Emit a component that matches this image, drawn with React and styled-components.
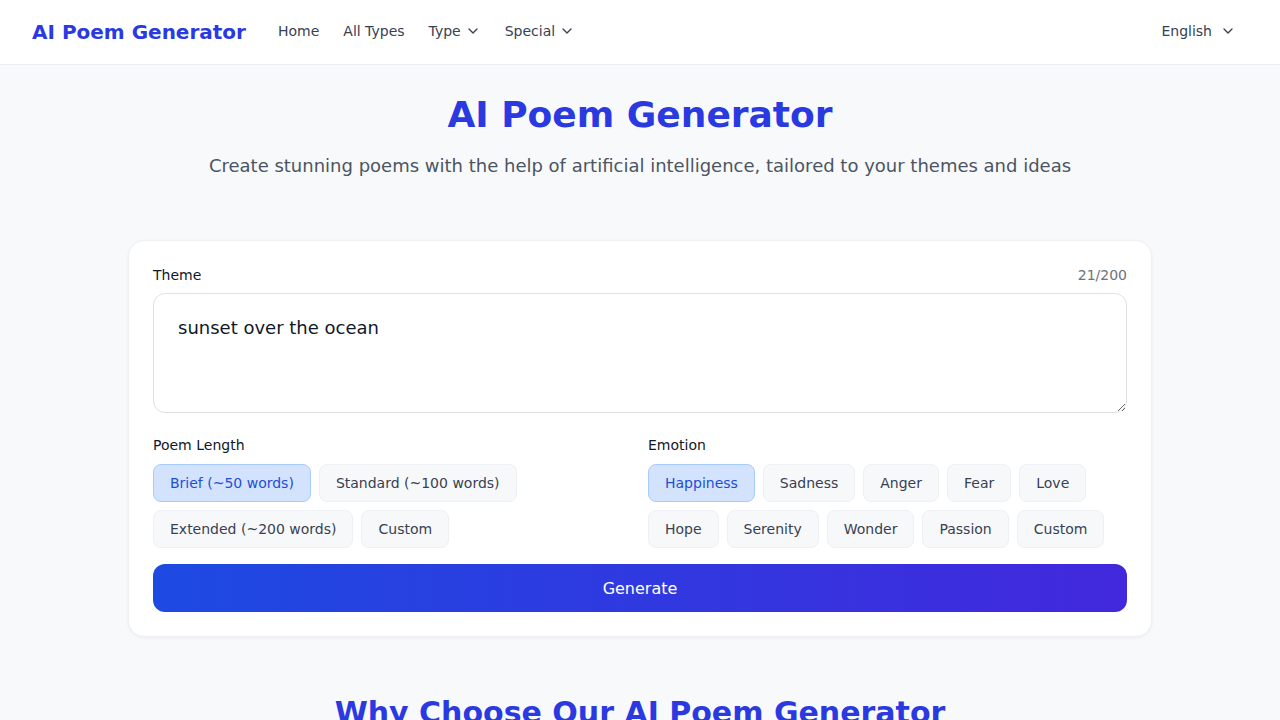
import styled, { createGlobalStyle } from "styled-components"

const Global = createGlobalStyle`
*{box-sizing:border-box;}
body{
    margin:0;
    background:#f8f9fa;
    font-family:"DejaVu Sans","Noto Sans",sans-serif;
    color:#111827;
}
`

const Chevron = () => (
    <svg width="16" height="16" viewBox="0 0 24 24" fill="none" stroke="currentColor" strokeWidth="2" strokeLinecap="round" strokeLinejoin="round">
        <path d="m6 9 6 6 6-6" />
    </svg>
)

const lengths = ["Brief (~50 words)", "Standard (~100 words)", "Extended (~200 words)", "Custom"]
const emotions = ["Happiness", "Sadness", "Anger", "Fear", "Love", "Hope", "Serenity", "Wonder", "Passion", "Custom"]

const App = () => {
    return (
        <>
            <Global />
            <Header>
                <Left>
                    <Logo>AI Poem Generator</Logo>
                    <Nav>
                        <NavLink>Home</NavLink>
                        <NavLink>All Types</NavLink>
                        <NavLink>Type <Chevron /></NavLink>
                        <NavLink>Special <Chevron /></NavLink>
                    </Nav>
                </Left>
                <Lang>English <Chevron /></Lang>
            </Header>
            <Main>
                <Hero>
                    <h1>AI Poem Generator</h1>
                    <p>Create stunning poems with the help of artificial intelligence, tailored to your themes and ideas</p>
                </Hero>
                <Card>
                    <LabelRow>
                        <Label>Theme</Label>
                        <Count>21/200</Count>
                    </LabelRow>
                    <TextArea defaultValue="sunset over the ocean" />
                    <Options>
                        <div>
                            <Label $gap={9}>Poem Length</Label>
                            <Chips>
                                {lengths.map((l, i) => (
                                    <Chip key={l} $active={i === 0}>{l}</Chip>
                                ))}
                            </Chips>
                        </div>
                        <div>
                            <Label $gap={9}>Emotion</Label>
                            <Chips>
                                {emotions.map((e, i) => (
                                    <Chip key={e} $active={i === 0}>{e}</Chip>
                                ))}
                            </Chips>
                        </div>
                    </Options>
                    <Generate>Generate</Generate>
                </Card>
                <SectionTitle>Why Choose Our AI Poem Generator</SectionTitle>
            </Main>
        </>
    )
}

export default App

const Header = styled.header`
height: 65px;
background: #fff;
border-bottom: 1px solid #eceef1;
display: flex;
align-items: center;
justify-content: space-between;
padding: 0 32px;
`
const Left = styled.div`
display: flex;
align-items: center;
gap: 32px;
`
const Logo = styled.div`
font-size: 20px;
font-weight: 700;
color: #2a3ae0;
`
const Nav = styled.nav`
display: flex;
align-items: center;
gap: 24px;
margin-bottom: 2px;
`
const NavLink = styled.a`
display: flex;
align-items: center;
gap: 4px;
font-size: 14px;
color: #374151;
cursor: pointer;
`
const Lang = styled.div`
display: flex;
align-items: center;
gap: 8px;
font-size: 14px;
color: #374151;
margin: 0 12px 2px 0;
`
const Main = styled.main`
display: flex;
flex-direction: column;
align-items: center;
`
const Hero = styled.div`
text-align: center;
padding-top: 28px;
h1{
    margin: 0;
    font-size: 36px;
    line-height: 44px;
    font-weight: 700;
    color: #2a3ae0;
}
p{
    margin: 15px 0 0;
    font-size: 18px;
    line-height: 28px;
    color: #4b5563;
}
`
const Card = styled.div`
width: 1024px;
margin-top: 60px;
background: #fff;
border: 1px solid #eef0f3;
border-radius: 16px;
box-shadow: 0 1px 3px rgba(0,0,0,0.06);
padding: 24px;
`
const LabelRow = styled.div`
display: flex;
justify-content: space-between;
align-items: center;
`
const Label = styled.div`
font-size: 14px;
line-height: 20px;
color: #111827;
margin-bottom: ${p => p.$gap || 8}px;
`
const Count = styled.div`
font-size: 14px;
line-height: 20px;
color: #6b7280;
margin-bottom: 8px;
`
const TextArea = styled.textarea`
display: block;
width: 100%;
height: 120px;
border: 1px solid #dfe1e5;
border-radius: 12px;
padding: 20px 24px;
font-family: inherit;
font-size: 18px;
line-height: 28px;
color: #111827;
resize: vertical;
outline: none;
`
const Options = styled.div`
display: grid;
grid-template-columns: 1fr 1fr;
gap: 16px;
margin-top: 22px;
`
const Chips = styled.div`
display: flex;
flex-wrap: wrap;
gap: 8px;
`
const Chip = styled.button`
height: 38px;
padding: 0 16px;
border-radius: 8px;
font-family: inherit;
font-size: 14px;
border: 1px solid ${p => p.$active ? "#a8cbfd" : "#eef0f3"};
background: ${p => p.$active ? "#d3e3fd" : "#f7f8fa"};
color: ${p => p.$active ? "#1d4ed8" : "#374151"};
cursor: pointer;
`
const Generate = styled.button`
display: block;
width: 100%;
height: 48px;
margin-top: 16px;
border: none;
border-radius: 12px;
background: linear-gradient(to right, #1d4ae2, #4228dd);
color: #fff;
font-family: inherit;
font-size: 16px;
cursor: pointer;
`
const SectionTitle = styled.h2`
margin: 58px 0 0;
font-size: 30px;
line-height: 36px;
font-weight: 700;
color: #2a3ae0;
`
